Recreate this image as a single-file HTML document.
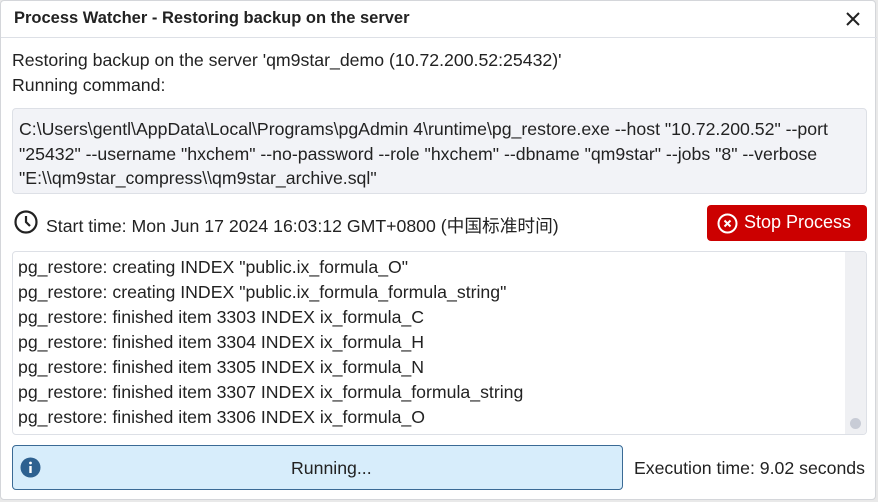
<!DOCTYPE html>
<html><head><meta charset="utf-8"><style>
*{box-sizing:border-box;margin:0;padding:0}
body{width:878px;height:502px;background:#e9e9e9;font-family:"Liberation Sans","Noto Sans CJK SC",sans-serif;color:#222;overflow:hidden;position:relative}
.dlg{position:absolute;left:0;top:0;width:876px;height:500px;background:#fff;border:1px solid #d4d6da;border-radius:4px}
.ab{position:absolute;white-space:nowrap}
.title{left:13px;top:8px;font-size:16.5px;font-weight:bold;color:#222}
.sep{left:0;top:36px;width:876px;height:1px;background:#dde0e6}
.t{font-size:17.7px;color:#222}
.cmd{left:11px;top:107px;width:855px;height:86px;background:#f2f3f7;border:1px solid #dde0e6;border-radius:4px;padding:8px 6px;font-size:17.7px;line-height:24.5px;white-space:normal}
.btn{left:706px;top:204px;width:160px;height:36px;background:#cc0000;border-radius:4px;color:#fff;font-size:18px}
.log{left:11px;top:250px;width:855px;height:184px;border:1px solid #dde0e6;border-radius:4px;overflow:hidden}
.ln{position:absolute;left:5px;font-size:17.7px}
.sb{position:absolute;right:0;top:0;width:21px;height:184px;background:#eff0f3}
.run{left:11px;top:444px;width:611px;height:45px;background:#d7edfb;border:1px solid #3a6a95;border-radius:4px}
</style></head><body>
<div class="dlg">
<div class="ab title">Process Watcher - Restoring backup on the server</div>
<svg class="ab" style="left:843px;top:9px" width="18" height="18" viewBox="0 0 18 18"><path d="M3 3L15 15M15 3L3 15" stroke="#222" stroke-width="2"/></svg>
<div class="ab sep"></div>
<div class="ab t" style="left:11px;top:49px">Restoring backup on the server 'qm9star_demo (10.72.200.52:25432)'</div>
<div class="ab t" style="left:11px;top:74px">Running command:</div>
<div class="ab cmd">C:\Users\gentl\AppData\Local\Programs\pgAdmin 4\runtime\pg_restore.exe --host "10.72.200.52" --port "25432" --username "hxchem" --no-password --role "hxchem" --dbname "qm9star" --jobs "8" --verbose "E:\\qm9star_compress\\qm9star_archive.sql"</div>
<svg class="ab" style="left:13px;top:209px" width="24" height="24" viewBox="0 0 24 24"><circle cx="12" cy="12" r="10.5" fill="none" stroke="#222" stroke-width="2.2"/><path d="M12 6v6l4 4" fill="none" stroke="#222" stroke-width="2.2"/></svg>
<div class="ab t" style="left:45px;top:211px">Start time: Mon Jun 17 2024 16:03:12 GMT+0800 (中国标准时间)</div>
<div class="ab btn"><svg style="position:absolute;left:10px;top:8px" width="21" height="21" viewBox="0 0 21 21"><circle cx="10.5" cy="10.5" r="9" fill="none" stroke="#fff" stroke-width="2"/><path d="M7.5 7.5l6 6M13.5 7.5l-6 6" stroke="#fff" stroke-width="2"/></svg><span style="position:absolute;left:37px;top:7px">Stop Process</span></div>
<div class="ab log">
<div class="ln" style="top:5px">pg_restore: creating INDEX "public.ix_formula_O"</div>
<div class="ln" style="top:30px">pg_restore: creating INDEX "public.ix_formula_formula_string"</div>
<div class="ln" style="top:55px">pg_restore: finished item 3303 INDEX ix_formula_C</div>
<div class="ln" style="top:80px">pg_restore: finished item 3304 INDEX ix_formula_H</div>
<div class="ln" style="top:105px">pg_restore: finished item 3305 INDEX ix_formula_N</div>
<div class="ln" style="top:130px">pg_restore: finished item 3307 INDEX ix_formula_formula_string</div>
<div class="ln" style="top:155px">pg_restore: finished item 3306 INDEX ix_formula_O</div>
<div class="sb"><span style="position:absolute;left:5px;top:166px;width:11px;height:11px;border-radius:50%;background:#c8ccd6"></span></div>
</div>
<div class="ab run"><svg style="position:absolute;left:7px;top:11px" width="21" height="21" viewBox="0 0 21 21"><circle cx="10.5" cy="10.5" r="10" fill="#2e6190"/><rect x="9.3" y="9" width="2.4" height="7" fill="#fff"/><circle cx="10.5" cy="6" r="1.4" fill="#fff"/></svg><span class="t" style="position:absolute;left:278px;top:12px">Running...</span></div>
<div class="ab t" style="right:10px;top:457px">Execution time: 9.02 seconds</div>
</div>
</body></html>
